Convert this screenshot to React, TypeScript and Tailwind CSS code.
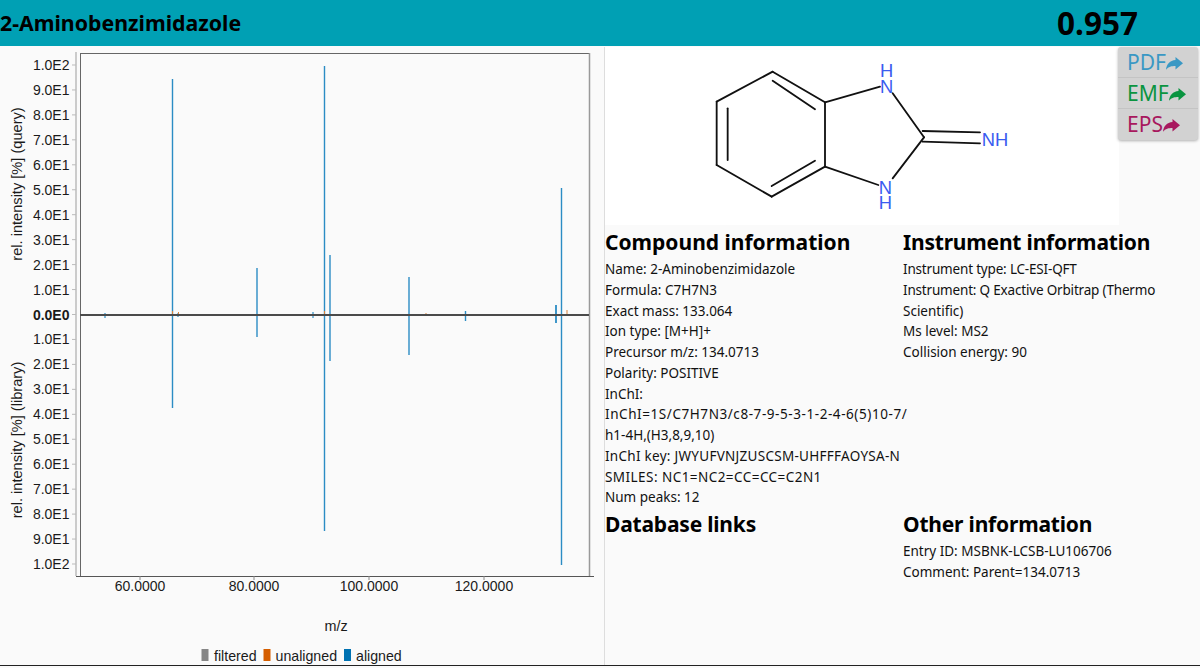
import React from "react";

const yLabels = ["1.0E2","9.0E1","8.0E1","7.0E1","6.0E1","5.0E1","4.0E1","3.0E1","2.0E1","1.0E1","0.0E0","1.0E1","2.0E1","3.0E1","4.0E1","5.0E1","6.0E1","7.0E1","8.0E1","9.0E1","1.0E2"];
const xLabels: [number, string][] = [[140,"60.0000"],[254,"80.0000"],[369,"100.0000"],[484,"120.0000"]];
const blue: [number, number, number, number][] = [
  [172.5,79,408,1.4],[324.5,66,531,1.4],[257,268,337,1.4],[330,255,361,1.4],[409,277,355,1.4],
  [465.5,311,321,1.4],[556,305,323,1.8],[561.5,188,565,1.4],[105,313,318,1.2],[178,313,317,1.2],[313,312,318,1.2],
];
const orange: [number, number, number][] = [[172.5,311,315],[324.5,311,315],[426,313,315],[567,310,315],[178.5,312,315]];

function Chart() {
  return (
    <svg width="604" height="618" viewBox="0 47 604 618" className="block font-['Liberation_Sans',sans-serif]">
      <rect x="80.5" y="53.5" width="509" height="523" fill="#fafafa" stroke="#666" strokeWidth="1" />
      <line x1="76" y1="52" x2="76" y2="576" stroke="#bbb" strokeWidth="1.5" />
      <line x1="76" y1="576.5" x2="594" y2="576.5" stroke="#555" strokeWidth="1.2" />
      <line x1="589.5" y1="53" x2="589.5" y2="576" stroke="#999" strokeWidth="1.5" />
      {yLabels.map((l, i) => {
        const y = 65 + i * 24.95;
        return (
          <g key={i}>
            <line x1="72" x2="76" y1={y} y2={y} stroke="#bbb" />
            <text x="69.5" y={y + 5} textAnchor="end" fontSize="14" fill="#1a1a1a" fontWeight={i === 10 ? 700 : 400}>{l}</text>
          </g>
        );
      })}
      {xLabels.map(([x, l]) => (
        <g key={l}>
          <line x1={x} x2={x} y1="576" y2="580" stroke="#888" />
          <text x={x} y="591" textAnchor="middle" fontSize="14" fill="#1a1a1a">{l}</text>
        </g>
      ))}
      {blue.map(([x, a, b, w], i) => (
        <line key={i} x1={x} x2={x} y1={a} y2={b} stroke="#2b8cc4" strokeWidth={w} />
      ))}
      {orange.map(([x, a, b], i) => (
        <line key={i} x1={x} x2={x} y1={a} y2={b} stroke="#d9823b" strokeWidth="1" />
      ))}
      <line x1="80" x2="589" y1="315" y2="315" stroke="#4a4a4a" strokeWidth="2" />
      <text transform="translate(22,184) rotate(-90)" textAnchor="middle" fontSize="14.6" fill="#1a1a1a">rel. intensity [%] (query)</text>
      <text transform="translate(22,440) rotate(-90)" textAnchor="middle" fontSize="14.6" fill="#1a1a1a">rel. intensity [%] (library)</text>
      <text x="336" y="631" textAnchor="middle" fontSize="14.4" fill="#1a1a1a">m/z</text>
      <rect x="201.5" y="649" width="7" height="12" fill="#868686" />
      <text x="214" y="660.5" fontSize="14.2" fill="#1a1a1a">filtered</text>
      <rect x="263.5" y="649" width="7" height="12" fill="#d55e00" />
      <text x="275.5" y="660.5" fontSize="14.2" fill="#1a1a1a">unaligned</text>
      <rect x="344" y="649" width="7" height="12" fill="#0072b2" />
      <text x="356" y="660.5" fontSize="14.2" fill="#1a1a1a">aligned</text>
    </svg>
  );
}

function Molecule() {
  const lines = [
    [218,65,50,155],[50,155,50,345],[50,345,215,440],[215,440,375,350],[375,350,375,157],[375,157,218,65],
    [218,92,345,178],[83,175,83,330],[215,408,345,332],
    [375,157,540,110],[578,130,672,262],[672,262,578,385],[375,350,535,405],
    [668,243,840,247],[668,275,840,280],
  ];
  return (
    <svg width="514" height="178" viewBox="-285 -9 1542 534" className="block font-['Liberation_Sans',sans-serif]">
      {lines.map((l, i) => (
        <line key={i} x1={l[0]} y1={l[1]} x2={l[2]} y2={l[3]} stroke="#111" strokeWidth="5.5" strokeLinecap="round" />
      ))}
      <g fill="#3a5cf0" fontSize="55" textAnchor="middle">
        <text x="560" y="82">
          H<tspan x="560" dy="46">N</tspan>
        </text>
        <text x="556" y="432">
          N<tspan x="556" dy="46">H</tspan>
        </text>
        <text x="885" y="287">NH</text>
      </g>
    </svg>
  );
}

function Section({ title, lines, titleCls = "" }: { title: string; lines: React.ReactNode[]; titleCls?: string }) {
  return (
    <div>
      <h2 className={`text-[21px] leading-[30px] mt-[2px] mb-[2px] font-bold text-black ${titleCls}`}>{title}</h2>
      {lines.map((l, i) => (
        <div key={i} className="text-[13.5px] leading-[20.75px] text-[#111]">{l}</div>
      ))}
    </div>
  );
}

function Btn({ label, cls }: { label: string; cls: string }) {
  return (
    <div className={`h-[31px] flex items-center pl-[9px] text-[21px] leading-none border-b border-[#c4c4c4] last:border-b-0 ${cls}`}>
      <span>{label}</span>
      <svg width="17" height="13" viewBox="0 0 17 13" className="shrink-0 mt-[2px]" fill="currentColor">
        <path d="M0 12.8 C0.5 7 4 3.5 9.5 3 V0 L17 6.2 L9.5 12.5 V9 C5.5 9 2.5 9.5 0 12.8 Z" />
      </svg>
    </div>
  );
}

export default function App() {
  return (
    <div className="relative w-[1200px] h-[668px] overflow-hidden bg-[#fafafa] font-['Noto_Sans','Open_Sans',sans-serif]">
      <header className="h-[46px] bg-[#00a0b4] flex items-center justify-between text-black font-bold">
        <div className="text-[21.3px]">2-Aminobenzimidazole</div>
        <div className="text-[31.5px] mr-[62px]">0.957</div>
      </header>
      <div className="h-[619px] mt-px flex border-b border-[#222]">
        <div className="w-[604px]"><Chart /></div>
        <div className="flex-1 border-l border-[#ddd]">
          <div className="w-[514px] h-[178px] bg-white"><Molecule /></div>
          <div className="grid grid-cols-[298px_297px] content-start">
            <div className="h-[282px]">
              <Section
                title="Compound information"
                lines={[
                  "Name: 2-Aminobenzimidazole",
                  "Formula: C7H7N3",
                  "Exact mass: 133.064",
                  "Ion type: [M+H]+",
                  "Precursor m/z: 134.0713",
                  "Polarity: POSITIVE",
                  "InChI:",
                  <span className="tracking-[0.57px] whitespace-nowrap">InChI=1S/C7H7N3/c8-7-9-5-3-1-2-4-6(5)10-7/</span>,
                  "h1-4H,(H3,8,9,10)",
                  <span className="tracking-[0.28px] whitespace-nowrap">InChI key: JWYUFVNJZUSCSM-UHFFFAOYSA-N</span>,
                  <span className="tracking-[0.45px]">SMILES: NC1=NC2=CC=CC=C2N1</span>,
                  "Num peaks: 12",
                ]}
              />
            </div>
            <Section
              title="Instrument information"
              titleCls="tracking-[-0.2px]"
              lines={[
                <span className="tracking-[-0.18px]">Instrument type: LC-ESI-QFT</span>,
                <span className="tracking-[-0.18px]">Instrument: Q Exactive Orbitrap (Thermo</span>,
                "Scientific)",
                "Ms level: MS2",
                "Collision energy: 90",
              ]}
            />
            <Section title="Database links" titleCls="tracking-[-0.2px]" lines={[]} />
            <Section
              title="Other information"
              titleCls="tracking-[-0.2px]"
              lines={["Entry ID: MSBNK-LCSB-LU106706", "Comment: Parent=134.0713"]}
            />
          </div>
        </div>
      </div>
      <div className="absolute left-[1118px] top-[47px] w-[80px] rounded-[3px] bg-[#d2d2d2] shadow-[0_1px_3px_rgba(0,0,0,0.3)]">
        <Btn label="PDF" cls="text-[#3a98c4]" />
        <Btn label="EMF" cls="text-[#0a9440]" />
        <Btn label="EPS" cls="text-[#a8185e]" />
      </div>
    </div>
  );
}
